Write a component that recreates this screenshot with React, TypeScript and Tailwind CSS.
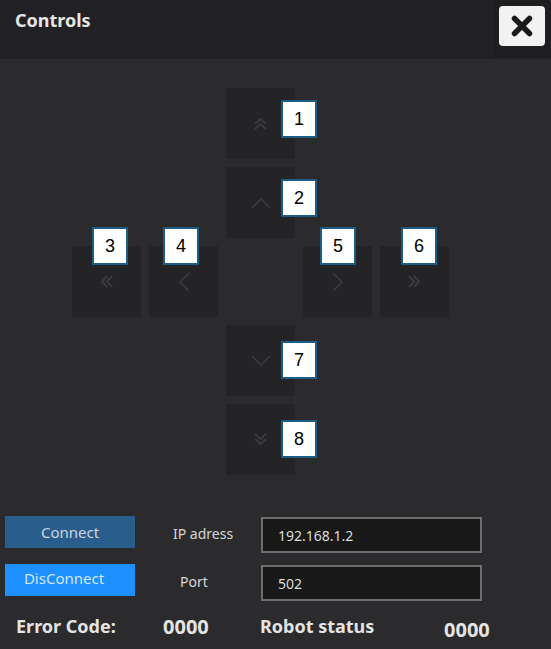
import React from 'react';

type Dir = 'up2' | 'up' | 'left2' | 'left' | 'right' | 'right2' | 'down' | 'down2';

const ICON = '#3b3b3d';

function Chevron({ dir }: { dir: Dir }) {
    const rot: Record<Dir, number> = {
        up2: 0, up: 0, left2: -90, left: -90, right: 90, right2: 90, down: 180, down2: 180,
    };
    const double = dir.endsWith('2');
    if (double) {
        return (
            <svg width="15" height="13" viewBox="0 0 15 13" style={{ transform: `rotate(${rot[dir]}deg)` }}>
                <path d="M2 7 L7.5 2 L13 7 M2 12 L7.5 7 L13 12" fill="none" stroke={ICON} strokeWidth="2" />
            </svg>
        );
    }
    return (
        <svg width="20" height="12" viewBox="0 0 20 12" style={{ transform: `rotate(${rot[dir]}deg)` }}>
            <path d="M1 11 L10 2 L19 11" fill="none" stroke={ICON} strokeWidth="1.6" />
        </svg>
    );
}

function Tag({ n, className }: { n: number; className: string }) {
    return (
        <div
            className={`absolute w-[36px] h-[38px] bg-white border-2 border-[#1b5d84] flex items-center justify-center text-black text-[18px] font-['Liberation_Sans',sans-serif] ${className}`}
        >
            {n}
        </div>
    );
}

function Tile({ dir, pos, tag, tagPos }: { dir: Dir; pos: string; tag: number; tagPos: string }) {
    return (
        <div className={`relative bg-[#242426] flex items-center justify-center ${pos}`}>
            <Chevron dir={dir} />
            <Tag n={tag} className={tagPos} />
        </div>
    );
}

export default function App() {
    return (
        <div className="w-[551px] h-[649px] bg-[#2b2b2d] flex flex-col font-['Noto_Sans',sans-serif] overflow-hidden">
            {/* Header */}
            <header className="h-[59px] bg-[#212123] flex items-start">
                <h1 className="pl-[15px] pt-[7px] text-[18px] font-bold text-[#e6e6e6]">Controls</h1>
                <div className="ml-auto w-[58px] h-[57px] bg-[#1e1e20] pl-[6px] pt-[6px]">
                    <button className="w-[46px] h-[40px] rounded-[4px] bg-[#f2f2f2] flex items-center justify-center">
                        <svg width="24" height="24" viewBox="0 0 24 24">
                            <path d="M4.5 4.5 L19.5 19.5 M19.5 4.5 L4.5 19.5" stroke="#1a1a1a" strokeWidth="5.5" strokeLinecap="round" />
                        </svg>
                    </button>
                </div>
            </header>

            {/* Direction pad */}
            <div className="mt-[29px] ml-[72px] grid grid-cols-[repeat(5,69px)] grid-rows-[repeat(5,71px)] gap-x-[8px] gap-y-[8px]">
                <Tile dir="up2" pos="col-start-3 row-start-1" tag={1} tagPos="left-[55px] top-[12px]" />
                <Tile dir="up" pos="col-start-3 row-start-2" tag={2} tagPos="left-[55px] top-[12px]" />
                <Tile dir="left2" pos="col-start-1 row-start-3" tag={3} tagPos="left-[20px] top-[-19px]" />
                <Tile dir="left" pos="col-start-2 row-start-3" tag={4} tagPos="left-[14px] top-[-19px]" />
                <Tile dir="right" pos="col-start-4 row-start-3" tag={5} tagPos="left-[17px] top-[-19px]" />
                <Tile dir="right2" pos="col-start-5 row-start-3" tag={6} tagPos="left-[21px] top-[-19px]" />
                <Tile dir="down" pos="col-start-3 row-start-4" tag={7} tagPos="left-[55px] top-[16px]" />
                <Tile dir="down2" pos="col-start-3 row-start-5" tag={8} tagPos="left-[55px] top-[16px]" />
            </div>

            {/* Connection */}
            <div className="mt-[41px] pl-[5px] flex flex-col text-[14px]">
                <div className="h-[48px] flex items-start">
                    <button className="w-[130px] h-[32px] bg-[#295d8b] text-[15px] text-[#c9d5e1] flex items-center justify-center">
                        Connect
                    </button>
                    <div className="w-[126px] pl-[38px] pt-[7px] text-[#d6d6d6]">IP adress</div>
                    <div className="mt-[1px] w-[221px] h-[36px] border-2 border-[#6d6d6d] bg-[#181818] text-[#dcdcdc] pl-[15px] flex items-center">
                        192.168.1.2
                    </div>
                </div>
                <div className="h-[48px] flex items-start">
                    <button className="w-[130px] h-[32px] bg-[#1e90ff] text-[15px] text-[#d3e6fa] flex items-center justify-center pr-[12px] pb-[3px]">
                        DisConnect
                    </button>
                    <div className="w-[126px] pl-[45px] pt-[7px] text-[#d6d6d6]">Port</div>
                    <div className="mt-[1px] w-[221px] h-[36px] border-2 border-[#6d6d6d] bg-[#181818] text-[#dcdcdc] pl-[15px] flex items-center">
                        502
                    </div>
                </div>
                <div className="flex items-start font-bold text-[18px] text-[#e4e4e4] mt-[1px] pl-[11px]">
                    <span className="w-[147px]">Error Code:</span>
                    <span className="w-[97px] text-[20px] mt-[-1px]">0000</span>
                    <span className="w-[184px]">Robot status</span>
                    <span className="text-[20px] mt-[2px]">0000</span>
                </div>
            </div>
        </div>
    );
}
